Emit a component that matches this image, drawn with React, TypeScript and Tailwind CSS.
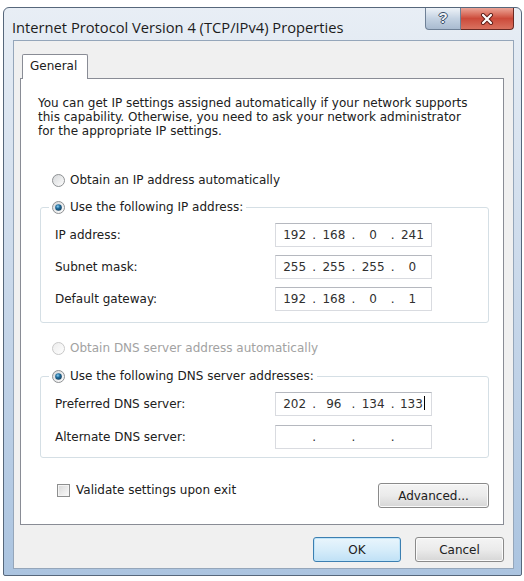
import { Fragment, useId } from "react";

function Radio({
  checked = false,
  disabled = false,
  label,
}: {
  checked?: boolean;
  disabled?: boolean;
  label: string;
}) {
  const id = useId().replace(/:/g, "");
  return (
    <div className="flex h-[16px] items-center gap-[5px]">
      <svg width="13" height="13" viewBox="0 0 13 13" className="shrink-0">
        <defs>
          <linearGradient id={`rb${id}`} x1="0" y1="0" x2="1" y2="1">
            <stop offset="0" stopColor={disabled ? "#ececec" : "#d4d6d8"} />
            <stop offset="1" stopColor="#ffffff" />
          </linearGradient>
          <radialGradient id={`rd${id}`} cx="0.4" cy="0.35" r="0.7">
            <stop offset="0" stopColor="#8ad0f4" />
            <stop offset="0.45" stopColor="#1f6a9a" />
            <stop offset="1" stopColor="#173f5c" />
          </radialGradient>
        </defs>
        <circle
          cx="6.5"
          cy="6.5"
          r="6"
          fill={`url(#rb${id})`}
          stroke={disabled ? "#c8c8c8" : "#8e9193"}
        />
        {checked && <circle cx="6.5" cy="6.5" r="3.3" fill={`url(#rd${id})`} />}
      </svg>
      <span className={disabled ? "text-[#a2a2a2]" : "text-[#202020]"}>{label}</span>
    </div>
  );
}

function IpField({ parts, caret = false }: { parts: string[]; caret?: boolean }) {
  return (
    <div className="flex h-[24px] w-[157px] items-center border border-[#d9dbe0] border-t-[#b5b8bf] bg-white px-[1px] text-[#303030]">
      {parts.map((p, i) => (
        <Fragment key={i}>
          {i > 0 && <span className="w-[4px] text-center">.</span>}
          <span className="flex-1 text-center">
            {p}
            {caret && i === parts.length - 1 && (
              <span className="ml-[1px] inline-block h-[14px] w-px bg-black align-[-2px]" />
            )}
          </span>
        </Fragment>
      ))}
    </div>
  );
}

function FieldRow({ label, children }: { label: string; children: React.ReactNode }) {
  return (
    <div className="flex items-center pl-[14px]">
      <span className="w-[220px] text-[#202020]">{label}</span>
      {children}
    </div>
  );
}

function WinButton({
  children,
  primary = false,
  className = "",
}: {
  children: React.ReactNode;
  primary?: boolean;
  className?: string;
}) {
  return (
    <button
      className={`flex h-[25px] items-center justify-center rounded-[3px] border text-[12px] text-[#202020] ${
        primary
          ? "border-[#3c7fb1] bg-gradient-to-b from-[#e9f5fc] via-[#d7edfa] to-[#c0e1f6] shadow-[inset_0_0_0_1px_#bfe4f9]"
          : "border-[#8a8a8a] bg-gradient-to-b from-[#f4f4f4] via-[#ebebeb] to-[#d6d6d6] shadow-[inset_0_0_0_1px_#fbfbfb]"
      } ${className}`}
    >
      {children}
    </button>
  );
}

export default function App() {
  return (
    <div className="h-[581px] w-[524px] overflow-hidden bg-white pl-[3px] pt-[7px] font-['DejaVu_Sans',Verdana,sans-serif] text-[12px]">
      <div className="flex h-[569px] w-[519px] flex-col rounded-t-[6px] rounded-b-[2px] border border-[#56677b] bg-gradient-to-b from-[#e8eef5] via-[#c9d8ea] to-[#abc4e0]">
        {/* title bar */}
        <div className="flex h-[32px] items-start justify-between">
          <span className="pl-[8px] pt-[10px] font-['Open_Sans',sans-serif] text-[14.7px] leading-[18px] text-[#1c1c1c]">
            Internet Protocol Version 4 (TCP/IPv4) Properties
          </span>
          <div className="mr-[7px] flex">
            <div className="flex h-[22px] w-[36px] items-center justify-center rounded-bl-[4px] border border-t-0 border-[#6e8096] bg-gradient-to-b from-[#eef3f8] via-[#c4d2e2] to-[#a9bbd0] font-['Liberation_Sans',sans-serif] text-[15px] font-bold text-[#eef2f6] [text-shadow:1px_0_0_#3a4e66,-1px_0_0_#3a4e66,0_1px_0_#3a4e66,0_-1px_0_#3a4e66]">
              ?
            </div>
            <div className="flex h-[22px] w-[53px] items-center justify-center rounded-br-[4px] border border-l-0 border-t-0 border-[#6b2a24] bg-gradient-to-b from-[#eba497] via-[#cc4a3a] to-[#d9715f]">
              <svg width="14" height="12" viewBox="0 0 14 12">
                <path d="M3 2 L11 10 M11 2 L3 10" stroke="#5a1a14" strokeWidth="4" strokeLinecap="round" />
                <path d="M3 2 L11 10 M11 2 L3 10" stroke="#ffffff" strokeWidth="2.2" strokeLinecap="round" />
              </svg>
            </div>
          </div>
        </div>

        {/* client area */}
        <div className="ml-[9px] h-[529px] w-[501px] border border-[#95a6ba] bg-[#f0f0f0] pl-[6px] pt-[13px]">
          <div className="relative z-10 -mb-[1px] ml-[2px] h-[25px] w-[66px] rounded-t-[2px] border border-b-0 border-[#898c95] bg-white pl-[7px] leading-[23px] text-[#202020]">
            General
          </div>
          <div className="h-[447px] w-[484px] border border-[#898c95] bg-white pt-[17px]">
            <p className="pl-[17px] leading-[14px] text-[#202020]">
              You can get IP settings assigned automatically if your network supports
              <br />
              this capability. Otherwise, you need to ask your network administrator
              <br />
              for the appropriate IP settings.
            </p>

            <div className="ml-[31px] mt-[34px]">
              <Radio label="Obtain an IP address automatically" />
            </div>

            <div className="ml-[19px] mt-[19px] w-[449px] rounded-[3px] border border-[#d5dfe5] pb-[11px]">
              <div className="-mt-[9px] ml-[8px] w-fit bg-white px-[3px]">
                <Radio checked label="Use the following IP address:" />
              </div>
              <div className="mt-[8px] flex flex-col gap-[8px]">
                <FieldRow label="IP address:">
                  <IpField parts={["192", "168", "0", "241"]} />
                </FieldRow>
                <FieldRow label="Subnet mask:">
                  <IpField parts={["255", "255", "255", "0"]} />
                </FieldRow>
                <FieldRow label="Default gateway:">
                  <IpField parts={["192", "168", "0", "1"]} />
                </FieldRow>
              </div>
            </div>

            <div className="ml-[31px] mt-[17px]">
              <Radio disabled label="Obtain DNS server address automatically" />
            </div>

            <div className="ml-[19px] mt-[20px] w-[449px] rounded-[3px] border border-[#d5dfe5] pb-[8px]">
              <div className="-mt-[9px] ml-[8px] w-fit bg-white px-[3px]">
                <Radio checked label="Use the following DNS server addresses:" />
              </div>
              <div className="mt-[8px] flex flex-col gap-[9px]">
                <FieldRow label="Preferred DNS server:">
                  <IpField parts={["202", "96", "134", "133"]} caret />
                </FieldRow>
                <FieldRow label="Alternate DNS server:">
                  <IpField parts={["", "", "", ""]} />
                </FieldRow>
              </div>
            </div>

            <div className="ml-[36px] mt-[25px] flex w-[432px] items-start justify-between">
              <div className="flex h-[14px] items-center gap-[6px]">
                <span className="h-[13px] w-[13px] border border-[#8e8f8f] bg-gradient-to-br from-[#d8d8d8] to-[#fbfbfb] shadow-[inset_0_0_0_1px_#f4f4f4]" />
                <span className="text-[#202020]">Validate settings upon exit</span>
              </div>
              <WinButton className="w-[111px]">Advanced...</WinButton>
            </div>
          </div>

          <div className="mt-[12px] flex w-[484px] justify-end gap-[14px]">
            <WinButton primary className="w-[88px]">
              OK
            </WinButton>
            <WinButton className="w-[89px]">Cancel</WinButton>
          </div>
        </div>
      </div>
    </div>
  );
}
